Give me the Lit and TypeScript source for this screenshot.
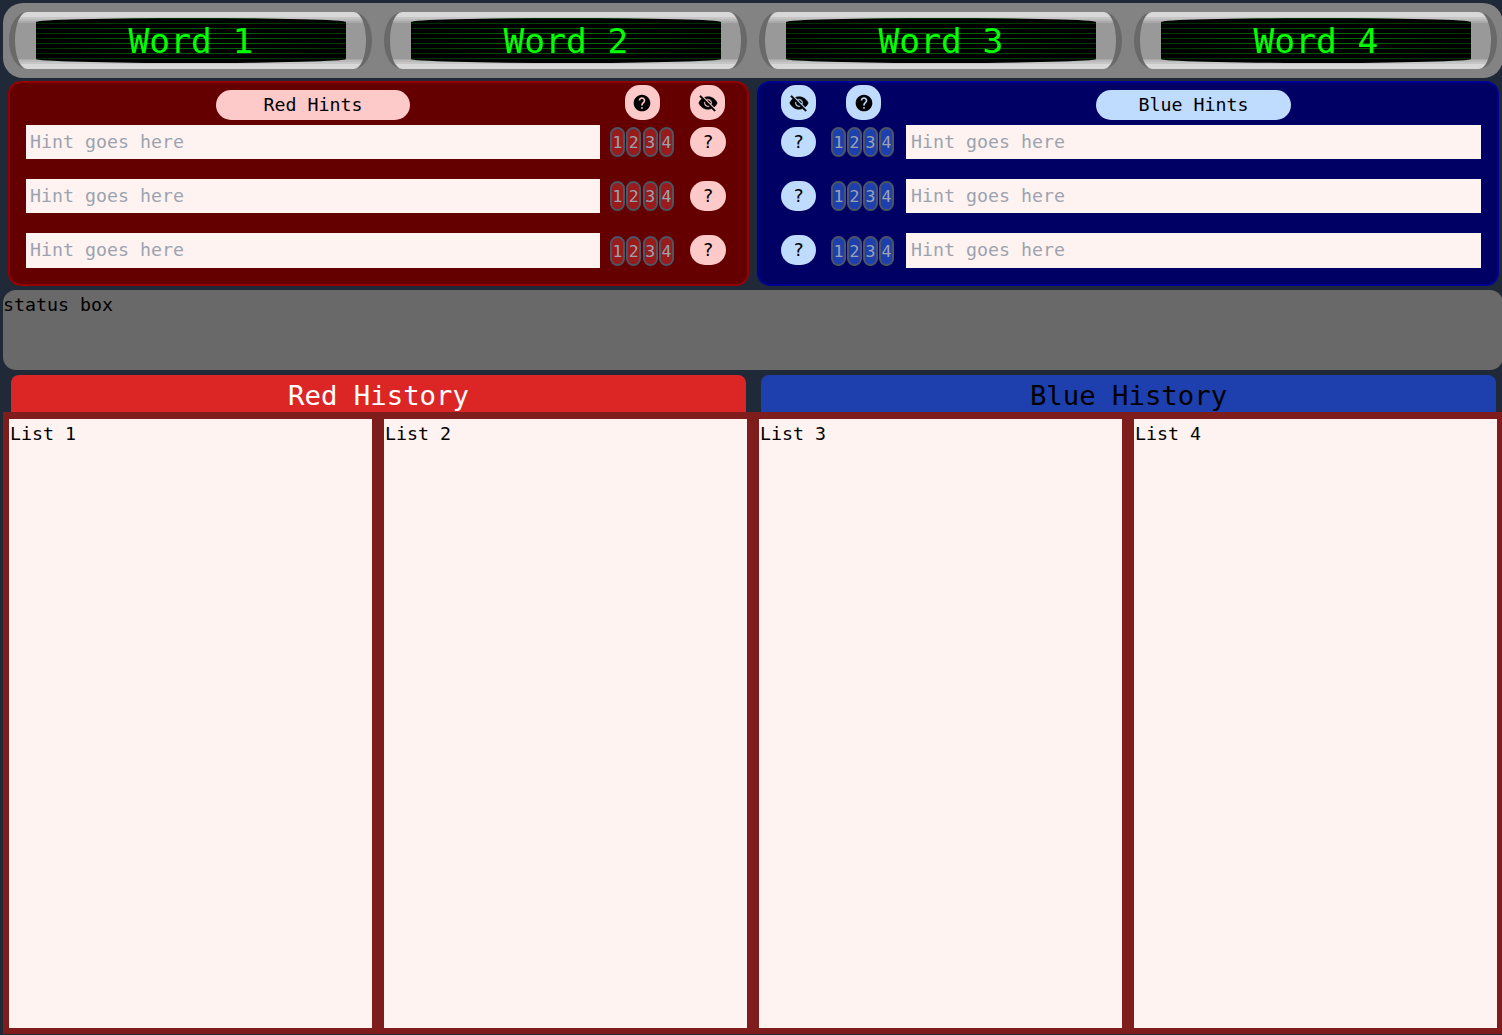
import { LitElement, html, css, svg } from "lit";
import { customElement, property } from "lit/decorators.js";

const HELP = svg`<path d="M12 2C6.48 2 2 6.48 2 12s4.48 10 10 10 10-4.48 10-10S17.52 2 12 2zm1 17h-2v-2h2v2zm2.07-7.75l-.9.92C13.45 12.9 13 13.5 13 15h-2v-.5c0-1.1.45-2.1 1.17-2.83l1.24-1.26c.37-.36.59-.86.59-1.41 0-1.1-.9-2-2-2s-2 .9-2 2H8c0-2.21 1.79-4 4-4s4 1.79 4 4c0 .88-.36 1.68-.93 2.25z"/>`;
const HIDE = svg`<path stroke="#000" stroke-width="0.7" d="M12 7c2.76 0 5 2.24 5 5 0 .65-.13 1.26-.36 1.83l2.92 2.92c1.51-1.26 2.7-2.89 3.43-4.75-1.73-4.39-6-7.5-11-7.5-1.4 0-2.74.25-3.98.7l2.16 2.16C10.74 7.13 11.35 7 12 7zM2 4.27l2.28 2.28.46.46C3.08 8.3 1.78 10.02 1 12c1.73 4.39 6 7.5 11 7.5 1.55 0 3.03-.3 4.38-.84l.42.42L19.73 22 21 20.73 3.27 3 2 4.27zM7.53 9.8l1.55 1.55c-.05.21-.08.43-.08.65 0 1.66 1.34 3 3 3 .22 0 .44-.03.65-.08l1.55 1.55c-.67.33-1.41.53-2.2.53-2.76 0-5-2.24-5-5 0-.79.2-1.53.53-2.2zm4.31-.78l3.15 3.15.02-.16c0-1.66-1.34-3-3-3l-.17.01z"/>`;

@customElement("word-screen")
export class WordScreen extends LitElement {
  @property() label = "";

  static styles = css`
    :host {
      display: block;
      padding: 9px 6px;
    }
    .tube {
      box-sizing: border-box;
      height: 57px;
      padding: 6px 20px 6px 21px;
      border: 0 solid #696969;
      border-width: 0 6px;
      border-radius: 18px / 50%;
      background: linear-gradient(
        #d8d8d8 0 5px, #c6c6c6 5px 7px, #b9b9b9 7px 9px, #a9a9a9 9px 11px,
        #999 11px 47px,
        #a9a9a9 47px 48px, #b9b9b9 48px 50px, #c6c6c6 50px 52px, #d8d8d8 52px
      );
    }
    .screen {
      height: 45px;
      border-radius: 50% / 4px;
      background:
        linear-gradient(#000 0 4px, transparent 4px 5px) 0 1px / 100% 5px,
        radial-gradient(ellipse at center, #008200, #003000 75%, #002800 100%);
      color: #0f0;
      font-size: 34.6px;
      line-height: 47px;
      text-align: center;
      white-space: pre;
    }
  `;

  render() {
    return html`<div class="tube"><div class="screen">${this.label}</div></div>`;
  }
}

@customElement("hint-panel")
export class HintPanel extends LitElement {
  @property({ reflect: true }) team = "red";

  static styles = css`
    :host {
      display: block;
      box-sizing: border-box;
      height: 205px;
      border: 2px solid var(--edge);
      border-radius: 13px;
      background: var(--panel);
      --edge: #960000;
      --panel: #640000;
      --pill: #fec9c9;
      --key: #991b1b;
      padding: 2px 21px 0 16px;
    }
    :host([team="blue"]) {
      --edge: #000096;
      --panel: #000064;
      --pill: #bfdbfe;
      --key: #1e40af;
      padding: 2px 16px 0 22px;
    }
    .head,
    .row {
      display: grid;
      grid-template-columns: 574px 10px 64px 16px 36px;
    }
    :host([team="blue"]) .row,
    :host([team="blue"]) .head {
      grid-template-columns: 35px 15px 63px 12px 575px;
    }
    .head {
      height: 35px;
      align-items: end;
    }
    .rows {
      margin-top: 5px;
      display: grid;
      grid-template-rows: 34px 34px 35px;
      row-gap: 20px;
    }
    .title {
      width: 194px;
      height: 30px;
      border-radius: 15px;
      background: var(--pill);
      justify-self: center;
      text-align: center;
      line-height: 29px;
    }
    :host([team="blue"]) .title {
      width: 195px;
    }
    .icon {
      width: 35px;
      height: 35px;
      border-radius: 15px;
      background: var(--pill);
      display: flex;
      align-items: center;
      justify-content: center;
    }
    .icon.mid {
      justify-self: center;
    }
    :host([team="blue"]) .icon.mid {
      justify-self: start;
      margin-left: 15px;
    }
    svg {
      width: 20px;
      height: 20px;
      display: block;
      overflow: visible;
    }
    .field {
      background: #fef3f1;
      color: #9ca3af;
      padding-left: 4px;
      line-height: 34px;
      white-space: pre;
    }
    :host([team="blue"]) .field {
      padding-left: 5px;
    }
    .ask {
      height: 30px;
      margin-top: 2px;
      border-radius: 15px;
      background: var(--pill);
      text-align: center;
      line-height: 29px;
    }
    .keys {
      display: flex;
      justify-content: space-between;
      align-self: center;
    }
    .key {
      box-sizing: border-box;
      width: 15px;
      height: 30px;
      border: 2px solid #4b5563;
      border-radius: 8px;
      background: var(--key);
      color: #9ca3af;
      font-size: 16.5px;
      line-height: 27px;
      display: flex;
      justify-content: center;
    }
  `;

  private head() {
    const title = html`<div class="title">${this.team === "red" ? "Red" : "Blue"} Hints</div>`;
    const help = html`<div class="icon mid"><svg viewBox="0 0 24 24">${HELP}</svg></div>`;
    const hide = html`<div class="icon"><svg viewBox="0 0 24 24">${HIDE}</svg></div>`;
    return this.arrange(title, help, hide);
  }

  private row() {
    const field = html`<div class="field">Hint goes here</div>`;
    const keys = html`<div class="keys">${[1, 2, 3, 4].map((n) => html`<span class="key">${n}</span>`)}</div>`;
    const ask = html`<div class="ask">?</div>`;
    return this.arrange(field, keys, ask);
  }

  private arrange(a: unknown, b: unknown, c: unknown) {
    const gap = html`<span></span>`;
    return this.team === "red" ? [a, gap, b, gap, c] : [c, gap, b, gap, a];
  }

  render() {
    return html`
      <div class="head">${this.head()}</div>
      <div class="rows">${[0, 1, 2].map(() => html`<div class="row">${this.row()}</div>`)}</div>
    `;
  }
}

@customElement("app-root")
export class AppRoot extends LitElement {
  static styles = css`
    :host {
      display: block;
      box-sizing: border-box;
      width: 100%;
      height: 1035px;
      overflow: hidden;
      padding: 3px 0 0 3px;
      background: #1f2937;
      color: #000;
      font-family: "DejaVu Sans Mono", "Liberation Mono", monospace;
      font-size: 18.27px;
    }
    .words {
      width: 1500px;
      height: 75px;
      border-radius: 20px;
      background: #838383;
      display: grid;
      grid-template-columns: repeat(4, 375px);
    }
    .hints {
      margin-top: 3px;
      padding-left: 5px;
      display: grid;
      grid-template-columns: 741px 742px;
      column-gap: 8px;
    }
    .status {
      width: 1500px;
      height: 80px;
      margin-top: 4px;
      border-radius: 13px;
      background: #696969;
      line-height: 29px;
    }
    .tabs {
      margin-top: 5px;
      padding-left: 8px;
      display: grid;
      grid-template-columns: 735px 735px;
      column-gap: 15px;
    }
    .tab {
      height: 37px;
      border-radius: 8px 8px 0 0;
      background: #dc2626;
      color: #fff;
      font-size: 27.3px;
      line-height: 41px;
      text-align: center;
    }
    .tab.blue {
      background: #1e40af;
      color: #000;
    }
    .lists {
      box-sizing: border-box;
      width: 1500px;
      height: 622px;
      padding: 7px 6px 6px;
      background: #7f1d1d;
      display: grid;
      grid-template-columns: repeat(4, 363px);
      column-gap: 12px;
    }
    .list {
      background: #fef3f1;
      line-height: 29px;
      padding-left: 1px;
    }
  `;

  render() {
    return html`
      <div class="words">
        ${[1, 2, 3, 4].map((n) => html`<word-screen label="Word ${n}"></word-screen>`)}
      </div>
      <div class="hints">
        <hint-panel team="red"></hint-panel>
        <hint-panel team="blue"></hint-panel>
      </div>
      <div class="status">status box</div>
      <div class="tabs">
        <div class="tab">Red History</div>
        <div class="tab blue">Blue History</div>
      </div>
      <div class="lists">${[1, 2, 3, 4].map((n) => html`<div class="list">List ${n}</div>`)}</div>
    `;
  }
}
